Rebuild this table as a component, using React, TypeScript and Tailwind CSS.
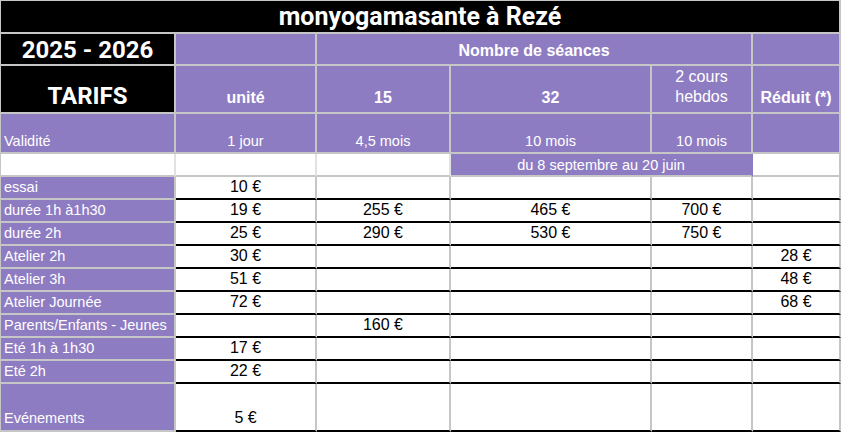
import React from "react"

const GRID = "border-[#c6c6c6]"
const PURPLE = "bg-[#8e7cc3]"

type Row = { label: string; vals: string[]; tall?: boolean }

const rows: Row[] = [
  { label: "essai", vals: ["10 €", "", "", "", ""] },
  { label: "durée 1h à1h30", vals: ["19 €", "255 €", "465 €", "700 €", ""] },
  { label: "durée 2h", vals: ["25 €", "290 €", "530 €", "750 €", ""] },
  { label: "Atelier 2h", vals: ["30 €", "", "", "", "28 €"] },
  { label: "Atelier 3h", vals: ["51 €", "", "", "", "48 €"] },
  { label: "Atelier Journée", vals: ["72 €", "", "", "", "68 €"] },
  { label: "Parents/Enfants - Jeunes", vals: ["", "160 €", "", "", ""] },
  { label: "Eté 1h à 1h30", vals: ["17 €", "", "", "", ""] },
  { label: "Eté 2h", vals: ["22 €", "", "", "", ""] },
  { label: "Evénements", vals: ["5 €", "", "", "", ""], tall: true },
]

export default function App() {
  return (
    <div className="h-[432px] w-[842px] overflow-hidden bg-white font-['Liberation_Sans',Arial,sans-serif]">
      <div
        className={`grid w-[841px] grid-cols-[175px_141px_134px_201px_101px_88px] grid-rows-[33px_32px_48px_40px_23px_repeat(9,23px)_48px] border-l border-t ${GRID}`}
      >
        {/* title */}
        <div className={`col-span-6 flex items-end justify-center border-r-2 border-b-2 ${GRID} bg-black pb-px font-['Roboto',sans-serif] text-[25px] font-bold leading-[28px] text-white`}>
          monyogamasante à Rezé
        </div>

        {/* season row */}
        <div className={`flex items-end justify-center border-r-2 border-b-2 ${GRID} bg-black font-['Roboto',sans-serif] text-[24px] font-bold leading-[28px] text-white`}>
          2025 - 2026
        </div>
        <div className={`border-r-2 border-b-2 ${GRID} ${PURPLE}`} />
        <div className={`col-span-3 flex items-end justify-center border-r-2 border-b-2 ${GRID} ${PURPLE} pb-[4px] text-[16px] font-bold leading-[18px] text-white`}>
          Nombre de séances
        </div>
        <div className={`border-r-2 border-b-2 ${GRID} ${PURPLE}`} />

        {/* column heads */}
        <div className={`flex items-end justify-center border-r-2 border-b-2 ${GRID} bg-black pb-[2px] font-['Roboto',sans-serif] text-[24px] font-bold leading-[28px] text-white`}>
          TARIFS
        </div>
        {["unité", "15", "32"].map((h) => (
          <div key={h} className={`flex items-end justify-center border-r-2 border-b-2 ${GRID} ${PURPLE} pb-[5px] text-[16px] font-bold leading-[18px] text-white`}>
            {h}
          </div>
        ))}
        <div className={`flex items-end justify-center border-r-2 border-b-2 ${GRID} ${PURPLE} pb-[5px] text-center text-[16px] leading-[20px] text-white`}>
          2 cours
          <br />
          hebdos
        </div>
        <div className={`flex items-end justify-center border-r-2 border-b-2 ${GRID} ${PURPLE} pb-[5px] text-[16px] font-bold leading-[18px] text-white`}>
          Réduit (*)
        </div>

        {/* validity */}
        <div className={`flex items-end border-r-2 border-b-2 ${GRID} ${PURPLE} px-[3px] pb-[2px] text-[14.5px] leading-[17px] text-white`}>
          Validité
        </div>
        {["1 jour", "4,5 mois", "10 mois", "10 mois", ""].map((v, i) => (
          <div key={i} className={`flex items-end justify-center border-r-2 border-b-2 ${GRID} ${PURPLE} pb-[2px] text-[14.5px] leading-[17px] text-white`}>
            {v}
          </div>
        ))}

        {/* period */}
        <div className="border-r-2 border-b-2 border-r-[#e2e2e2] border-b-[#c6c6c6] bg-white" />
        <div className="border-r-2 border-b-2 border-r-[#e2e2e2] border-b-[#c6c6c6] bg-white" />
        <div className="border-r-2 border-b-2 border-r-[#e2e2e2] border-b-[#c6c6c6] bg-white" />
        <div className={`col-span-2 flex items-end justify-center border-r-2 border-b-2 border-r-[#8e7cc3] border-b-[#c6c6c6] ${PURPLE} pb-[1px] text-[14.5px] leading-[17px] text-white`}>
          du 8 septembre au 20 juin
        </div>
        <div className={`border-r-2 border-b-2 ${GRID} bg-white`} />

        {/* prices */}
        {rows.map((r) => (
          <React.Fragment key={r.label}>
            <div className={`flex items-end border-r-2 border-b-2 ${GRID} ${PURPLE} px-[3px] ${r.tall ? "pb-[3px]" : "pb-[2px]"} whitespace-nowrap text-[14.5px] leading-[17px] text-white`}>
              {r.label}
            </div>
            {r.vals.map((v, i) => (
              <div
                key={i}
                className={`flex items-end justify-center border-r-2 border-b-2 border-r-[#c6c6c6] border-b-black bg-white ${r.tall ? "pb-[3px]" : "pb-[2px]"} text-[16px] leading-[18px] text-black`}
              >
                {v}
              </div>
            ))}
          </React.Fragment>
        ))}
      </div>
    </div>
  )
}
